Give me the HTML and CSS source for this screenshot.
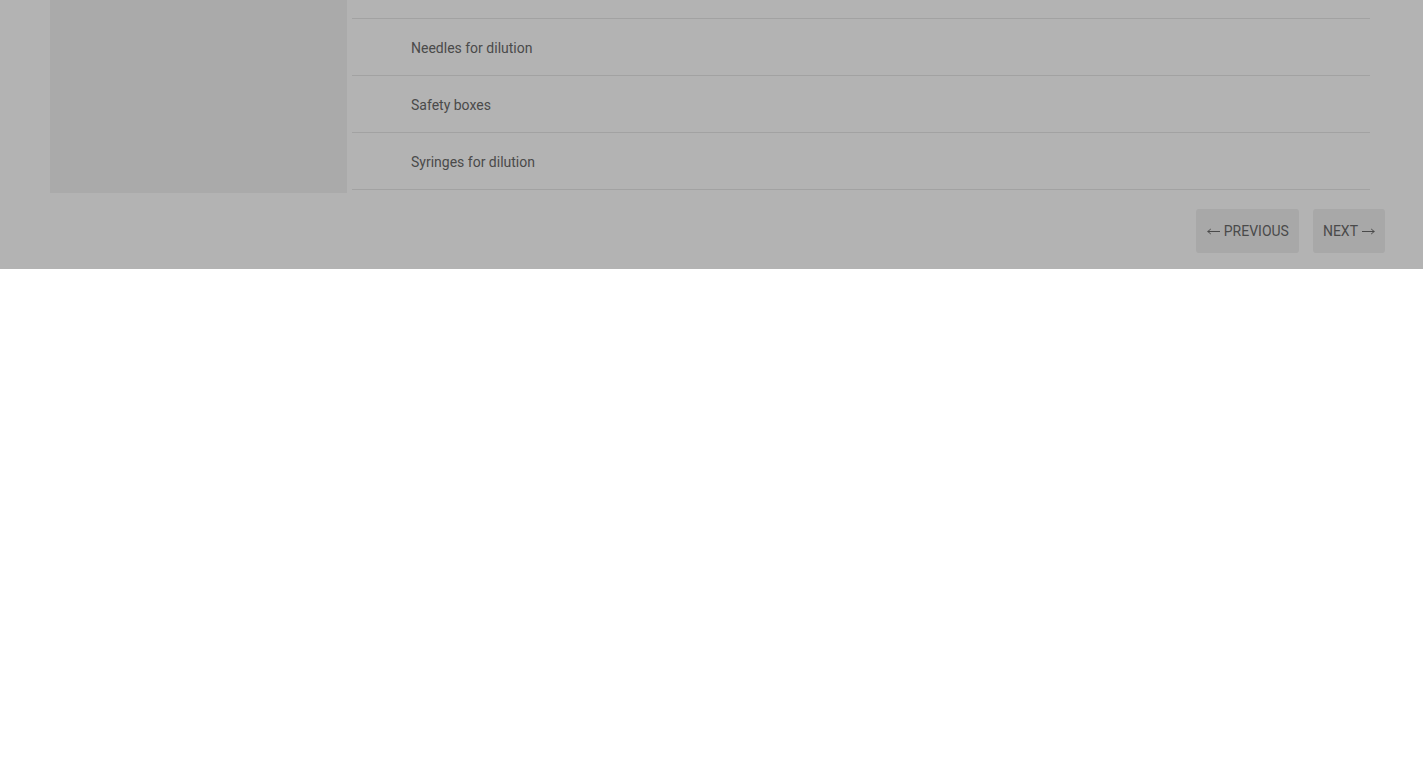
FILE: index.html
```html
<!DOCTYPE html>
<html lang="en">
<head>
<meta charset="utf-8">
<title>Items</title>
<link rel="stylesheet" href="styles.css">
</head>
<body>
<div class="overlay">
  <div class="content">
    <div class="panel"></div>
    <ul class="list">
      <li class="row row-cut"></li>
      <li class="row">Needles for dilution</li>
      <li class="row">Safety boxes</li>
      <li class="row">Syringes for dilution</li>
    </ul>
  </div>
  <div class="footer">
    <button class="btn btn-prev"><svg class="arrow" width="13" height="7" viewBox="0 0 13 7"><path d="M0.5 3.5H13M0.8 3.5L3.8 1M0.8 3.5L3.8 6" fill="none" stroke="currentColor" stroke-width="1"/></svg><span>PREVIOUS</span></button>
    <button class="btn"><span>NEXT</span><svg class="arrow" width="13" height="7" viewBox="0 0 13 7"><path d="M0 3.5H12.5M12.2 3.5L9.2 1M12.2 3.5L9.2 6" fill="none" stroke="currentColor" stroke-width="1"/></svg></button>
  </div>
</div>
</body>
</html>
```
FILE: styles.css
```css
html, body {
  margin: 0;
  padding: 0;
  background: #ffffff;
  font-family: Roboto, "Liberation Sans", sans-serif;
}
.overlay {
  background: #b3b3b3;
  height: 269px;
  box-sizing: border-box;
}
.content {
  display: flex;
  align-items: flex-start;
  padding-left: 50px;
}
.panel {
  width: 297px;
  height: 193px;
  background: #aaaaaa;
  flex: none;
}
.list {
  list-style: none;
  margin: 0 0 0 5px;
  padding: 0;
  width: 1018px;
}
.row {
  display: flex;
  align-items: center;
  padding: 2px 0 0 59px;
  box-sizing: border-box;
  height: 57px;
  border-bottom: 1px solid #a2a2a2;
  font-size: 14px;
  color: #4a4a4a;
}
.row-cut {
  height: 19px;
  padding: 0;
}
.footer {
  display: flex;
  justify-content: flex-end;
  gap: 14px;
  padding: 16px 38px 0 0;
}
.btn {
  display: inline-flex;
  align-items: center;
  gap: 4px;
  height: 44px;
  padding: 0 10px;
  border: none;
  border-radius: 3px;
  background: #a8a8a8;
  color: #4a4a4a;
  font-family: Roboto, "Liberation Sans", sans-serif;
  font-size: 14px;
  cursor: pointer;
}
.btn-prev {
  padding-left: 11px;
}
.arrow {
  display: block;
  flex: none;
}
```
